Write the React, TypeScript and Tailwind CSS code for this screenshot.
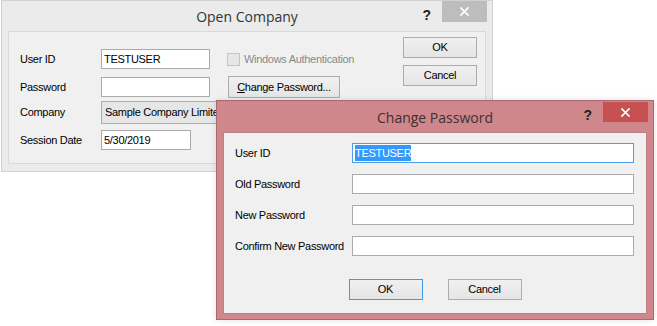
import React from "react";

const BODY = "font-['Liberation_Sans',Arial,sans-serif] text-[11px] tracking-[-0.3px] text-black";
const TITLE = "font-['Open_Sans',sans-serif] text-[14px]";

function CloseGlyph() {
  return (
    <svg width="9" height="9" viewBox="0 0 9 9" aria-hidden>
      <path d="M1 1l7 7M8 1L1 8" stroke="#fff" strokeWidth="1.7" strokeLinecap="square" />
    </svg>
  );
}

function Button({
  children,
  focused = false,
  className = "",
}: {
  children: React.ReactNode;
  focused?: boolean;
  className?: string;
}) {
  return (
    <div
      className={`flex items-center justify-center border bg-gradient-to-b from-[#f0f0f0] to-[#e5e5e5] ${
        focused ? "border-[#3c9af0]" : "border-[#acacac]"
      } ${className}`}
    >
      {children}
    </div>
  );
}

function TextBox({
  children,
  className = "",
  focused = false,
}: {
  children?: React.ReactNode;
  className?: string;
  focused?: boolean;
}) {
  return (
    <div
      className={`flex h-[20px] items-center border bg-white pl-[2px] ${
        focused ? "border-[#4a9eea]" : "border-[#ababab]"
      } ${className}`}
    >
      {children}
    </div>
  );
}

function OpenCompany() {
  return (
    <div className="absolute left-px top-0 flex h-[172px] w-[492px] flex-col border border-[#d2d2d2] bg-[#ebebeb]">
      {/* title bar */}
      <div className="relative flex h-[30px] shrink-0 items-start justify-end pr-[5px]">
        <span className={`absolute inset-x-0 top-[5px] text-center text-[#333] ${TITLE}`}>
          Open Company
        </span>
        <span className="mr-[11px] mt-[4px] font-['Liberation_Sans',sans-serif] text-[14px] font-bold text-[#222]">
          ?
        </span>
        <div className="flex h-[21px] w-[45px] items-center justify-center bg-[#bdbdbd]">
          <CloseGlyph />
        </div>
      </div>

      {/* client */}
      <div className={`ml-[6px] flex h-[133px] w-[478px] justify-between border border-[#d9d9d9] bg-[#f0f0f0] ${BODY}`}>
        <div className="flex flex-col pl-[11px]">
          <div className="mt-[17px] flex h-[20px] items-center">
            <span className="w-[81px]">User ID</span>
            <TextBox className="w-[109px]">TESTUSER</TextBox>
            <div className="ml-[17px] h-[13px] w-[13px] border border-[#c4c4c4] bg-[#e6e6e6]" />
            <span className="ml-[4px] text-[#8a8a8a]">Windows Authentication</span>
          </div>
          <div className="mt-[8px] flex h-[20px] items-center">
            <span className="w-[81px]">Password</span>
            <TextBox className="w-[109px]" />
            <Button className="ml-[18px] h-[22px] w-[112px]">
              <span>
                <span className="underline">C</span>hange Password...
              </span>
            </Button>
          </div>
          <div className="mt-[3px] flex h-[24px] items-center">
            <span className="w-[81px]">Company</span>
            <div className="flex h-[23px] w-[238px] items-center border border-[#adadad] bg-[#e6e6e6] pl-[3px]">
              Sample Company Limited
            </div>
          </div>
          <div className="mt-[6px] flex h-[20px] items-center">
            <span className="w-[81px]">Session Date</span>
            <TextBox className="w-[90px]">5/30/2019</TextBox>
          </div>
        </div>

        <div className="flex flex-col gap-[7px] pr-[8px] pt-[5px]">
          <Button className="h-[21px] w-[74px]">OK</Button>
          <Button className="h-[21px] w-[74px]">Cancel</Button>
        </div>
      </div>
    </div>
  );
}

function ChangePassword() {
  const rows = ["User ID", "Old Password", "New Password", "Confirm New Password"];
  return (
    <div className="absolute left-[216px] top-[100px] flex h-[220px] w-[438px] flex-col border border-[#a8686d] bg-[#cf878c] shadow-[0_0_6px_rgba(0,0,0,0.12)]">
      <div className="relative flex h-[31px] shrink-0 items-start justify-end pr-[5px]">
        <span className={`absolute inset-x-0 top-[6px] text-center text-[#3d3031] ${TITLE}`}>
          Change Password
        </span>
        <span className="mr-[11px] mt-[4px] font-['Liberation_Sans',sans-serif] text-[14px] font-bold text-[#222]">
          ?
        </span>
        <div className="mt-px flex h-[20px] w-[45px] items-center justify-center bg-[#c75050]">
          <CloseGlyph />
        </div>
      </div>

      <div className={`ml-[6px] flex h-[182px] w-[424px] flex-col border border-[#c07d82] bg-[#f0f0f0] ${BODY}`}>
        <div className="mt-[10px] flex flex-col gap-[11px] pl-[11px]">
          {rows.map((r, i) => (
            <div key={r} className="flex h-[20px] items-center">
              <span className="w-[117px]">{r}</span>
              <TextBox className="w-[282px]" focused={i === 0}>
                {i === 0 && <span className="bg-[#3399ff] text-white">TESTUSER</span>}
              </TextBox>
            </div>
          ))}
        </div>
        <div className="mt-[23px] flex justify-center gap-[25px]">
          <Button focused className="h-[21px] w-[74px]">OK</Button>
          <Button className="h-[21px] w-[74px]">Cancel</Button>
        </div>
      </div>
    </div>
  );
}

export default function App() {
  return (
    <div className="relative h-[326px] w-[657px] overflow-hidden bg-white">
      <OpenCompany />
      <ChangePassword />
    </div>
  );
}
